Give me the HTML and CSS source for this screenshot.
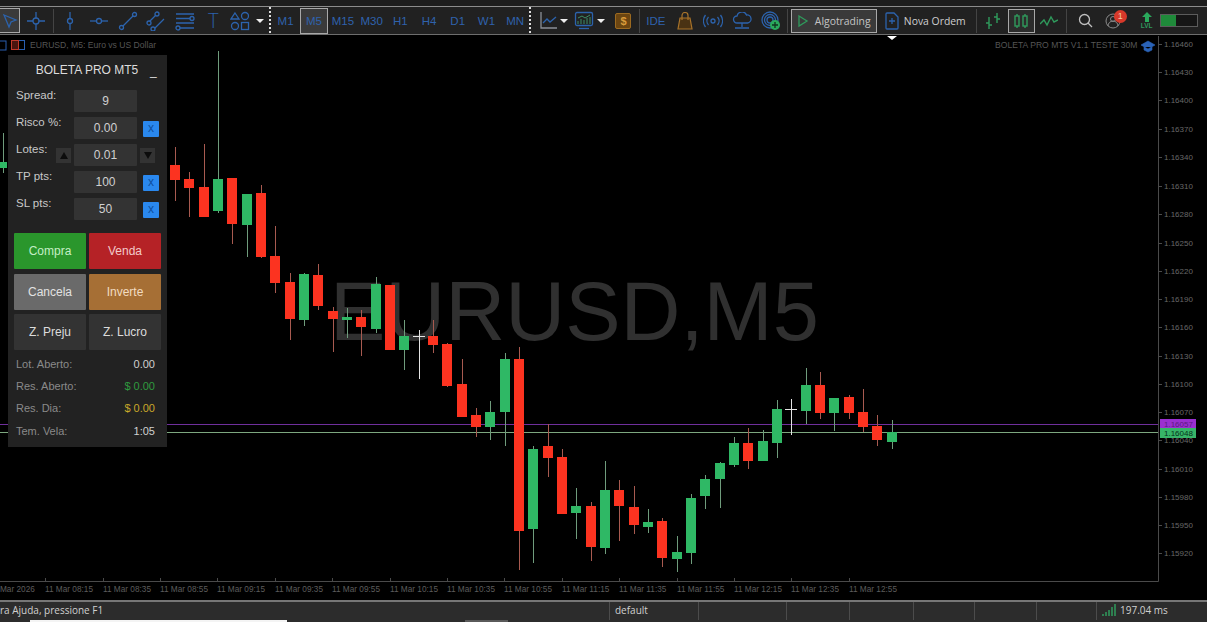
FILE: index.html
```html
<!DOCTYPE html>
<html lang="pt">
<head>
<meta charset="utf-8">
<title>BOLETA PRO MT5</title>
<link rel="stylesheet" href="styles.css">
</head>
<body>
<div class="app">
  <div class="strip"></div>
  <div class="toolbar">
    <div class="cell sel boxed"><svg width="18" height="18" viewBox="0 0 18 18"><path d="M3 3l12 5-5 2-2 5z" class="ic"/></svg></div>
    <div class="cell cross"><svg width="20" height="20" viewBox="0 0 20 20"><path d="M10 1v18M1 10h18" class="ic"/><circle cx="10" cy="10" r="3" class="ic fillbg"/></svg></div>
    <div class="sep s1"></div>
    <div class="cell"><svg width="20" height="20" viewBox="0 0 20 20"><path d="M10 1v18" class="ic"/><circle cx="10" cy="10" r="2.5" class="ic fillbg"/></svg></div>
    <div class="cell"><svg width="20" height="20" viewBox="0 0 20 20"><path d="M1 10h18" class="ic"/><circle cx="10" cy="10" r="2.5" class="ic fillbg"/></svg></div>
    <div class="cell"><svg width="20" height="20" viewBox="0 0 20 20"><path d="M4 16L16 4" class="ic"/><circle cx="3.5" cy="16.5" r="2" class="ic fillbg"/><circle cx="16.5" cy="3.5" r="2" class="ic fillbg"/></svg></div>
    <div class="cell"><svg width="20" height="20" viewBox="0 0 20 20"><path d="M3 11L10 4M8 18L18 8" class="ic"/><circle cx="3" cy="12" r="2" class="ic fillbg"/><circle cx="11" cy="3" r="2" class="ic fillbg"/><circle cx="7" cy="18" r="2" class="ic fillbg"/></svg></div>
    <div class="cell"><svg width="20" height="20" viewBox="0 0 20 20"><path d="M1 3h18M1 7.500h15M1 12h18M4 17h15" class="ic"/><circle cx="17" cy="7.500" r="2" class="ic fillbg"/><circle cx="3" cy="17" r="2" class="ic fillbg"/></svg></div>
    <div class="cell ttool">T</div>
    <div class="cell shapes"><svg width="20" height="20" viewBox="0 0 20 20"><path d="M5 2l4 6H1z" class="ic"/><circle cx="15" cy="5" r="3.500" class="ic"/><circle cx="5" cy="15" r="3.500" class="ic"/><rect x="11.500" y="11.500" width="7" height="7" class="ic"/></svg></div>
    <div class="caret c1"></div>
    <div class="dots d1"></div>
    <div class="tf">M1</div>
    <div class="tf boxed">M5</div>
    <div class="tf">M15</div>
    <div class="tf">M30</div>
    <div class="tf">H1</div>
    <div class="tf">H4</div>
    <div class="tf">D1</div>
    <div class="tf">W1</div>
    <div class="tf">MN</div>
    <div class="dots d2"></div>
    <div class="icon24 chartic"><svg width="18" height="20" viewBox="0 0 18 20"><path d="M1 1v16h16" class="ic dim"/><path d="M3 12l4-4 3 3 6-5" class="ic"/></svg></div>
    <div class="caret c2"></div>
    <div class="icon24 market"><svg width="20" height="20" viewBox="0 0 20 20"><rect x="1.500" y="1.500" width="17" height="13" rx="1.500" class="ic"/><path d="M4 13v-3M7 13V8M10 13V9M13 13V7M16 13V6M4 7l4-2 3 2 5-3" class="ic gr"/><path d="M5 17.500h10" class="ic"/></svg></div>
    <div class="caret c3"></div>
    <div class="money"><span>$</span></div>
    <div class="sep s2"></div>
    <div class="tf ide">IDE</div>
    <div class="cell"><svg width="16" height="18" viewBox="0 0 16 18"><path d="M3 6h10l2 11H1z" class="or"/><path d="M5 8V3.500a3 3 0 0 1 6 0V8" class="orl"/></svg></div>
    <div class="cell"><svg width="20" height="14" viewBox="0 0 20 14"><circle cx="10" cy="7" r="2" class="ic"/><path d="M5.500 3a6 6 0 0 0 0 8M14.500 3a6 6 0 0 1 0 8M2.500 1a10 10 0 0 0 0 12M17.500 1a10 10 0 0 1 0 12" class="ic"/></svg></div>
    <div class="cell"><svg width="20" height="18" viewBox="0 0 20 18"><path d="M5 11a3.500 3.500 0 0 1 0-7 5 5 0 0 1 9.500-1A4 4 0 0 1 15.500 11z" class="ic"/><path d="M10 11v4M3 16h14" class="ic"/></svg></div>
    <div class="cell"><svg width="20" height="20" viewBox="0 0 20 20"><circle cx="9" cy="9" r="8" class="ic"/><circle cx="9" cy="9" r="5.500" class="ic"/><circle cx="9" cy="9" r="3" class="ic"/><circle cx="14" cy="14" r="5" class="grf"/><path d="M14 11v6M11 14h6" class="plus"/></svg></div>
    <div class="sep s3"></div>
    <div class="algo boxed"><svg width="12" height="14" viewBox="0 0 12 14"><path d="M2 2l8 5-8 5z" class="play"/></svg><span>Algotrading</span></div>
    <div class="nova"><svg width="14" height="18" viewBox="0 0 14 18"><path d="M2 1h7l4 4v11a1 1 0 0 1-1 1H2a1 1 0 0 1-1-1V2a1 1 0 0 1 1-1z" class="ic"/><path d="M7 6v6M4 9h6" class="ic"/></svg><span>Nova Ordem</span></div>
    <div class="sep s4"></div>
    <div class="cell g"><svg width="18" height="18" viewBox="0 0 18 18"><path d="M5 5v12M2 11h3M5 13h3M13 1v10M10 5h3M13 7h3" class="grn"/></svg></div>
    <div class="mode boxed"><svg width="14" height="16" viewBox="0 0 14 16"><rect x="1" y="3" width="4" height="10" class="grn"/><rect x="9" y="3" width="4" height="10" class="grn"/><path d="M3 1v2M3 13v2M11 1v2M11 13v2" class="grn"/></svg></div>
    <div class="cell g"><svg width="18" height="12" viewBox="0 0 18 12"><path d="M0 9l4-4 3 5 4-8 3 5 4-2" class="grn"/></svg></div>
    <div class="sep s5"></div>
    <div class="cell srch"><svg width="15" height="15" viewBox="0 0 15 15"><circle cx="6.500" cy="6.500" r="5" class="wh"/><path d="M10 10l4 4" class="wh"/></svg></div>
    <div class="comm">
      <svg width="16" height="16" viewBox="0 0 16 16"><circle cx="8" cy="8" r="7" class="gy"/><circle cx="8" cy="6" r="2.500" class="gy"/><path d="M3 13a5 5 0 0 1 10 0" class="gy"/></svg>
      <span class="badge">1</span>
    </div>
    <div class="lvl"><svg width="10" height="10" viewBox="0 0 10 10"><path d="M5 0l5 5H7v5H3V5H0z" class="grf"/></svg><span>LVL</span></div>
    <div class="batt"><div class="batt-fill"></div></div>
  </div>
  <div class="chart">
    <svg class="plot" width="1207" height="565" viewBox="0 35 1207 565">
      <text x="330" y="340" class="wm">EURUSD,M5</text>
      <path d="M0 424.500H1158" class="pl"/>
      <path d="M0 432.500H1158" class="gl"/>

      <path class="wu" d="M3.500 133V173M218.500 51V213M247.500 194V257M304.500 273V326M347.500 308V338M376.500 277V333M404.500 320V370M490.500 401V440M505.500 353V446M533.500 446V563M576.500 488V539M605.500 461V554M648.500 509V533M677.500 536V572M691.500 494V564M705.500 475V509M720.500 462V508M734.500 437V467M763.500 430V461M777.500 400V458M806.500 368V424M834.500 398V431M892.500 420V449"/>
      <path class="wd" d="M175.500 147V201M189.500 172V217M204.500 144V217M232.500 178V244M261.500 185V258M275.500 226V293M290.500 273V340M318.500 264V310M333.500 307V352M361.500 310V356M390.500 285V350M433.500 320V353M447.500 343V387M462.500 359V417M476.500 408V437M519.500 347V570M548.500 424V477M562.500 449V514M591.500 502V561M619.500 480V541M634.500 486V534M662.500 518V567M748.500 428V469M820.500 372V419M849.500 395V419M863.500 389V432M877.500 415V446"/>
      <path class="wj" d="M419.500 330V379M413 336.500H425M791.500 399V435M785 409.500H797"/>

      <g class="up">
        <rect x="-2" y="162" width="9" height="6"/><rect x="213" y="179" width="10" height="32"/><rect x="242" y="194" width="10" height="31"/><rect x="299" y="274" width="10" height="46"/><rect x="342" y="317" width="10" height="3"/><rect x="371" y="284" width="10" height="45"/><rect x="399" y="336" width="10" height="14"/><rect x="485" y="412" width="10" height="15"/><rect x="500" y="359" width="10" height="53"/><rect x="528" y="449" width="10" height="80"/><rect x="571" y="506" width="10" height="7"/><rect x="600" y="490" width="10" height="58"/><rect x="643" y="522" width="10" height="5"/><rect x="672" y="552" width="10" height="7"/><rect x="686" y="498" width="10" height="55"/><rect x="700" y="479" width="10" height="17"/><rect x="715" y="463" width="10" height="16"/><rect x="729" y="443" width="10" height="22"/><rect x="758" y="441" width="10" height="20"/><rect x="772" y="409" width="10" height="34"/><rect x="801" y="385" width="10" height="26"/><rect x="829" y="398" width="10" height="15"/><rect x="887" y="432" width="10" height="10"/>
      </g>
      <g class="dn">
        <rect x="170" y="165" width="10" height="15"/><rect x="184" y="179" width="10" height="9"/><rect x="199" y="187" width="10" height="30"/><rect x="227" y="178" width="10" height="46"/><rect x="256" y="193" width="10" height="64"/><rect x="270" y="256" width="10" height="27"/><rect x="285" y="282" width="10" height="37"/><rect x="313" y="275" width="10" height="31"/><rect x="328" y="311" width="10" height="8"/><rect x="356" y="317" width="10" height="10"/><rect x="385" y="285" width="10" height="65"/><rect x="428" y="336" width="10" height="9"/><rect x="442" y="344" width="10" height="42"/><rect x="457" y="384" width="10" height="33"/><rect x="471" y="415" width="10" height="12"/><rect x="514" y="359" width="10" height="172"/><rect x="543" y="446" width="10" height="12"/><rect x="557" y="457" width="10" height="57"/><rect x="586" y="506" width="10" height="41"/><rect x="614" y="490" width="10" height="16"/><rect x="629" y="507" width="10" height="18"/><rect x="657" y="521" width="10" height="37"/><rect x="743" y="443" width="10" height="18"/><rect x="815" y="385" width="10" height="28"/><rect x="844" y="397" width="10" height="16"/><rect x="858" y="412" width="10" height="15"/><rect x="872" y="426" width="10" height="14"/>
      </g>

      <path d="M0 581.500H1158.500M1158.500 36V581.500" class="axis"/>
      <path d="M45.500 581v-3M103.500 581v-3M160.500 581v-3M217.500 581v-3M275.500 581v-3M332.500 581v-3M390.500 581v-3M447.500 581v-3M504.500 581v-3M562.500 581v-3M619.500 581v-3M677.500 581v-3M734.500 581v-3M791.500 581v-3M849.500 581v-3" class="axis"/>
      <path d="M1158 44.500h4M1158 72.500h4M1158 100.500h4M1158 129.500h4M1158 157.500h4M1158 186.500h4M1158 214.500h4M1158 243.500h4M1158 271.500h4M1158 299.500h4M1158 327.500h4M1158 356.500h4M1158 384.500h4M1158 412.500h4M1158 440.500h4M1158 469.500h4M1158 497.500h4M1158 525.500h4M1158 553.500h4" class="axis"/>

      <g class="price">
        <text x="1164" y="47">1.16460</text><text x="1164" y="75">1.16430</text><text x="1164" y="103">1.16400</text><text x="1164" y="132">1.16370</text><text x="1164" y="160">1.16340</text><text x="1164" y="189">1.16310</text><text x="1164" y="217">1.16280</text><text x="1164" y="246">1.16250</text><text x="1164" y="274">1.16220</text><text x="1164" y="302">1.16190</text><text x="1164" y="330">1.16160</text><text x="1164" y="359">1.16130</text><text x="1164" y="387">1.16100</text><text x="1164" y="415">1.16070</text><text x="1164" y="443">1.16040</text><text x="1164" y="472">1.16010</text><text x="1164" y="500">1.15980</text><text x="1164" y="528">1.15950</text><text x="1164" y="556">1.15920</text>
      </g>
      <rect x="1160" y="419" width="36" height="10" class="tagp"/>
      <rect x="1160" y="428" width="36" height="10" class="tagg"/>
      <text x="1164" y="427" class="tagt tp">1.16057</text>
      <text x="1164" y="436" class="tagt">1.16048</text>

      <g class="time">
        <text x="0" y="592">Mar 2026</text><text x="45" y="592">11 Mar 08:15</text><text x="103" y="592">11 Mar 08:35</text><text x="160" y="592">11 Mar 08:55</text><text x="217" y="592">11 Mar 09:15</text><text x="275" y="592">11 Mar 09:35</text><text x="332" y="592">11 Mar 09:55</text><text x="390" y="592">11 Mar 10:15</text><text x="447" y="592">11 Mar 10:35</text><text x="504" y="592">11 Mar 10:55</text><text x="562" y="592">11 Mar 11:15</text><text x="619" y="592">11 Mar 11:35</text><text x="677" y="592">11 Mar 11:55</text><text x="734" y="592">11 Mar 12:15</text><text x="791" y="592">11 Mar 12:35</text><text x="849" y="592">11 Mar 12:55</text>
      </g>

      <text x="30" y="48" class="title">EURUSD, M5:  Euro vs US Dollar</text>
      <text x="995" y="48" class="title">BOLETA PRO MT5 V1.1 TESTE 30M</text>
      <rect x="-2" y="41" width="8" height="9" class="mi"/>
      <rect x="18.500" y="40.500" width="6" height="9" class="mi"/>
      <rect x="11.500" y="40.500" width="7" height="9" class="mr"/>
      <path d="M1141 45l7-4 7 4-7 4zM1144 47v3l4 2 4-2v-3" class="cap"/>
      <path d="M887 36h10l-5 4z" class="shift"/>
    </svg>

    <aside class="panel">
      <div class="p-head"><span class="p-title">BOLETA PRO MT5</span><span class="p-min">_</span></div>
      <div class="p-fields">
        <span class="lab">Spread:</span><span class="side"></span><span class="field">9</span><span class="side"></span>
        <span class="lab">Risco %:</span><span class="side"></span><span class="field">0.00</span><span class="xbtn">x</span>
        <span class="lab">Lotes:</span><span class="arrow"><i class="up-t"></i></span><span class="field">0.01</span><span class="arrow a-r"><i class="dn-t"></i></span>
        <span class="lab">TP pts:</span><span class="side"></span><span class="field">100</span><span class="xbtn">x</span>
        <span class="lab">SL pts:</span><span class="side"></span><span class="field">50</span><span class="xbtn">x</span>
      </div>
      <div class="p-btns">
        <button class="b b-buy">Compra</button><button class="b b-sell">Venda</button>
        <button class="b b-cancel">Cancela</button><button class="b b-inv">Inverte</button>
        <button class="b b-z">Z. Preju</button><button class="b b-z">Z. Lucro</button>
      </div>
      <dl class="p-stats">
        <div><dt>Lot. Aberto:</dt><dd>0.00</dd></div>
        <div><dt>Res. Aberto:</dt><dd class="v-g">$ 0.00</dd></div>
        <div><dt>Res. Dia:</dt><dd class="v-y">$ 0.00</dd></div>
        <div><dt>Tem. Vela:</dt><dd>1:05</dd></div>
      </dl>
    </aside>
  </div>
  <div class="status">
    <div class="st st-help">ra Ajuda, pressione F1</div>
    <div class="st st-def">default</div>
    <div class="st w88"></div>
    <div class="st w63"></div>
    <div class="st w64"></div>
    <div class="st w61"></div>
    <div class="st w62"></div>
    <div class="st w60"></div>
    <div class="st st-ping">
      <svg width="14" height="12" viewBox="0 0 14 12"><path d="M1 12v-2M4 12V8M7 12V6M10 12V3M13 12V0" class="ping"/></svg>
      <span>197.04 ms</span>
    </div>
    <div class="under u1"></div>
    <div class="under u2"></div>
  </div>
</div>
</body>
</html>
```
FILE: styles.css
```css
* { box-sizing: border-box; }
html, body { margin: 0; padding: 0; background: #000; }
body { width: 1207px; height: 622px; overflow: hidden; font-family: "Liberation Sans", Arial, sans-serif; }
.app { display: flex; flex-direction: column; width: 1207px; height: 622px; }

.strip { height: 6px; background: #1d1d1d; flex: none; }

.toolbar { flex: none; height: 29px; display: flex; align-items: center; background: #212121; border-top: 1px solid #8c8c8c; border-bottom: 1px solid #6e6e6e; }
.toolbar svg { display: block; }
.cell { width: 28.6px; height: 26px; display: flex; align-items: center; justify-content: center; flex: none; }
.boxed { border: 1px solid #a8a8a8; background: #3a3a3a; }
.sel { width: 21px; height: 25px; margin-left: -1px; }
.cross { margin-left: 1.500px; }
.sep { width: 1px; height: 24px; background: #444; flex: none; }
.s1 { margin: 0 2.500px; }
.s2 { margin: 0 7px 0 8px; }
.s3 { margin: 0 3px 0 2px; }
.s4 { margin: 0 2px 0 10px; }
.s5 { margin: 0 7px 0 2px; }
.ic { fill: none; stroke: #2c63ad; stroke-width: 1.300; }
.ic.dim { stroke: #8a8f96; }
.ic.gr { stroke: #3d8f68; stroke-width: 1; }
.fillbg { fill: #212121; }
.ttool { font-family: "Inter", sans-serif; font-weight: 200; font-size: 20px; color: #2c63ad; }
.shapes { margin-left: -2px; }
.caret { flex: none; width: 0; height: 0; border-left: 4px solid transparent; border-right: 4px solid transparent; border-top: 4px solid #eee; }
.c1 { margin-left: 2px; margin-right: 2px; }
.c2 { margin-right: 0; }
.c3 { margin-left: 1px; margin-right: 3px; }
.dots { flex: none; width: 2px; height: 28px; background: repeating-linear-gradient(to bottom, #ddd 0 2px, transparent 2px 4px); }
.d1 { margin: 0 0 0 3px; }
.d2 { margin: 0 4px 0 0; }
.tf { flex: none; width: 28.700px; height: 26px; display: flex; align-items: center; justify-content: center; color: #2f62ad; font-size: 11.500px; }
.tf.boxed { width: 28px; margin-right: .7px; }
.icon24 { flex: none; width: 24px; height: 24px; display: flex; align-items: center; justify-content: center; }
.chartic { margin-left: 2px; margin-right: -1px; }
.market { margin-left: 4px; }
.money { flex: none; width: 16px; height: 16px; background: #6b4511; border: 1px solid #9c6a20; border-radius: 2px; display: flex; align-items: center; justify-content: center; font-size: 11px; font-weight: bold; color: #d99a3a; margin-left: 7px; }
.ide { width: 17px; margin-right: 6px; }
.or { fill: #4a3213; stroke: #a8732a; stroke-width: 1.200; }
.orl { fill: none; stroke: #a8732a; stroke-width: 1.200; }
.grf { fill: #2aa95c; }
.plus { stroke: #10331f; stroke-width: 1.300; fill: none; }
.algo { flex: none; width: 86px; height: 24px; display: flex; align-items: center; gap: 6px; padding-left: 5px; color: #c4c4c4; font-family: "Open Sans", sans-serif; font-size: 10.400px; }
.play { fill: none; stroke: #2f9a5c; stroke-width: 1.300; }
.nova { flex: none; display: flex; align-items: center; gap: 5px; margin-left: 8px; color: #cfcfcf; font-family: "Open Sans", sans-serif; font-size: 10.400px; }
.grn { fill: none; stroke: #2f9a5c; stroke-width: 1.400; }
.mode { flex: none; width: 27px; height: 24px; display: flex; align-items: center; justify-content: center; background: #2c2c2c; }
.g { width: 29px; }
.wh { fill: none; stroke: #c0c0c0; stroke-width: 1.300; }
.gy { fill: none; stroke: #8a8a8a; stroke-width: 1; }
.srch { width: 24px; }
.comm { flex: none; position: relative; width: 18px; margin-left: 7px; }
.badge { position: absolute; left: 9px; top: -3px; width: 13px; height: 13px; border-radius: 50%; background: #d8392a; color: #f4c9a0; font-size: 9px; line-height: 13px; text-align: center; }
.lvl { flex: none; margin-left: 17px; width: 14px; display: flex; flex-direction: column; align-items: center; color: #2f9a5c; font-size: 6.500px; font-weight: bold; line-height: 8px; }
.batt { flex: none; margin-left: 6px; width: 38px; height: 13px; border: 1px solid #5c5c5c; background: #161616; }
.batt-fill { width: 15px; height: 100%; background: #1f8a3a; }

.chart { flex: 1 1 auto; position: relative; background: #000; overflow: hidden; }
.plot { display: block; }
.wm { font-family: "Liberation Sans", sans-serif; font-size: 83px; fill: #303030; }
.pl { stroke: #6f2f9c; stroke-width: 1; }
.gl { stroke: #7da77f; stroke-width: 1; }
.wu { stroke: #6f9c7c; stroke-width: 1; fill: none; }
.wd { stroke: #a85a50; stroke-width: 1; fill: none; }
.wj { stroke: #e4e4e4; stroke-width: 1; fill: none; }
.up { fill: #2fb865; }
.dn { fill: #fc3320; }
.axis { stroke: #4a4a4a; stroke-width: 1; fill: none; }
.price { font-size: 8px; fill: #686868; }
.time { font-size: 8.250px; fill: #5c5c5c; }
.title { font-size: 8.600px; fill: #555; }
.tagp { fill: #9a2fd0; }
.tagg { fill: #37b468; }
.tagt { font-size: 8px; fill: #05301a; }
.tagt.tp { fill: #5a1a80; }
.mi { fill: none; stroke: #2a5fb0; stroke-width: 1; }
.mr { fill: #4a1510; stroke: #c0392b; stroke-width: 1; }
.cap { fill: #2a63b8; stroke: #2a63b8; stroke-width: .6; }
.shift { fill: #fff; }

.panel { position: absolute; left: 8px; top: 20px; width: 159px; height: 392px; background: #222; color: #ccc; font-size: 12px; }
.p-head { position: relative; height: 35px; display: flex; align-items: center; justify-content: center; }
.p-title { color: #dcdcdc; margin-left: -1px; margin-top: -5px; }
.p-min { position: absolute; left: 142px; top: 9px; color: #ddd; }
.p-fields { display: grid; grid-template-columns: 40px 18px 63px 22px; grid-auto-rows: 22px; row-gap: 5px; padding-left: 8px; align-items: center; }
.lab { color: #c8c8c8; align-self: start; margin-top: -2px; font-size: 11.500px; line-height: 14px; white-space: nowrap; }
.field { height: 22px; background: #333; color: #d0d0d0; display: flex; align-items: center; justify-content: center; border-radius: 1px; }
.side { display: block; }
.xbtn { justify-self: end; width: 16px; height: 16px; margin-top: 1px; border-radius: 1px; background: #2a88ee; color: #0f4f9f; font-size: 12px; line-height: 15px; text-align: center; }
.arrow { width: 15px; height: 15px; background: #333; display: flex; align-items: center; justify-content: center; justify-self: start; margin-top: 1px; }
.a-r { justify-self: end; margin-right: 4px; }
.up-t { width: 0; height: 0; border-left: 4px solid transparent; border-right: 4px solid transparent; border-bottom: 7px solid #0c0c0c; }
.dn-t { width: 0; height: 0; border-left: 4px solid transparent; border-right: 4px solid transparent; border-top: 7px solid #0c0c0c; }
.p-btns { display: grid; grid-template-columns: 72px 72px; grid-auto-rows: 36px; column-gap: 3px; row-gap: 4.500px; margin: 13px 0 0 6px; }
.b { border: 0; padding: 0; border-radius: 1px; font-family: "Liberation Sans", sans-serif; font-size: 12px; }
.b-buy { background: #2a962c; color: #c5eec5; }
.b-sell { background: #b52226; color: #f3caca; }
.b-cancel { background: #6a6a6a; color: #e2e2e2; }
.b-inv { background: #a66f35; color: #f2dcc0; }
.b-z { background: #333; color: #dcdcdc; }
.p-stats { margin: 3px 0 0; padding: 0 12px 0 8px; font-size: 11px; }
.p-stats div { display: flex; justify-content: space-between; align-items: center; height: 22.200px; }
.p-stats dt { color: #8a8a8a; }
.p-stats dd { margin: 0; color: #d0d0d0; }
.p-stats .v-g { color: #2f9a3f; }
.p-stats .v-y { color: #c9a82a; }

.status { flex: none; position: relative; height: 22px; display: flex; background: #2c2c2c; border-top: 2px solid #777; color: #d0d0d0; font-family: "Open Sans", sans-serif; font-size: 10px; }
.st { flex: none; height: 18px; padding-bottom: 2px; border-right: 1px solid #4c4c4c; display: flex; align-items: center; }
.st-help { width: 610px; }
.st-def { width: 89px; padding-left: 5px; }
.w88 { width: 88px; }
.w63 { width: 63px; }
.w64 { width: 64px; }
.w61 { width: 61px; }
.w62 { width: 62px; }
.w60 { width: 60px; }
.st-ping { border: 0; gap: 4px; padding-left: 5px; }
.ping { stroke: #2f9a5c; stroke-width: 1.500; fill: none; }
.under { position: absolute; bottom: 0; height: 2px; }
.u1 { left: 30px; width: 257px; background: #f4f4f4; }
.u2 { left: 465px; width: 43px; background: #5a5a5a; }
```
